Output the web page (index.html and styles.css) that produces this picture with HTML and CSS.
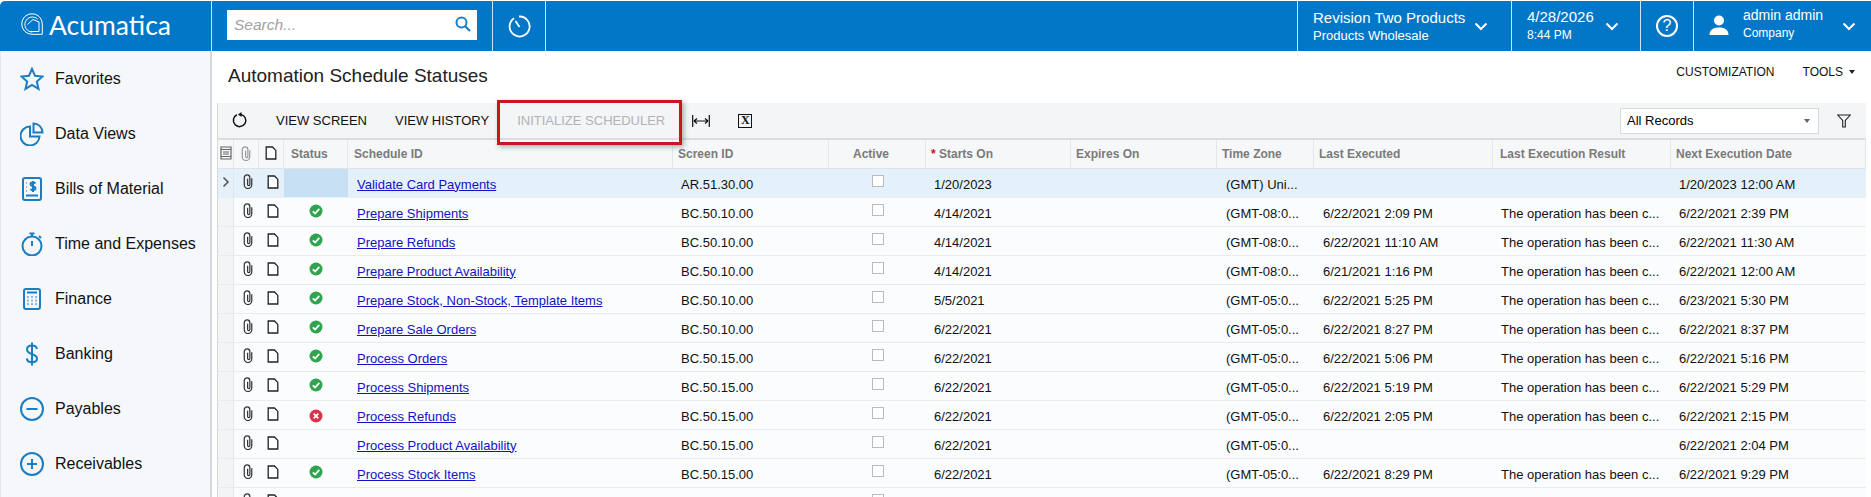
FILE: index.html
```html
<!DOCTYPE html>
<html lang="en">
<head>
<meta charset="utf-8">
<title>Automation Schedule Statuses</title>
<link rel="stylesheet" href="styles.css">
</head>
<body>
<svg class="defs" width="0" height="0" aria-hidden="true">
  <symbol id="clip" viewBox="0 0 12 16"><path d="M10 4.500v7a4 4 0 0 1-8 0V4a3 3 0 0 1 6 0v7.300a1.200 1.200 0 0 1-2.400 0V5" fill="none" stroke="currentColor" stroke-width="1.300"/></symbol>
  <symbol id="file" viewBox="0 0 12 14"><path d="M1.200 1h6.300l3.300 3.400v8.600H1.200z" fill="#fff" stroke="currentColor" stroke-width="1.300"/></symbol>
  <symbol id="ok" viewBox="0 0 14 14"><circle cx="7" cy="7" r="6.500" fill="#2fa44f"/><path d="M3.800 7.300l2.300 2.200 4.200-4.600" fill="none" stroke="#fff" stroke-width="1.800"/></symbol>
  <symbol id="err" viewBox="0 0 14 14"><circle cx="7" cy="7" r="6.500" fill="#d8344a"/><path d="M4.700 4.700l4.600 4.600M9.300 4.700l-4.600 4.600" fill="none" stroke="#fff" stroke-width="1.700"/></symbol>
</svg>

<header class="topbar">
  <div class="brand">
    <svg class="brand-mark" viewBox="0 0 22 22"><g fill="none" stroke="#fff" stroke-width="1"><path d="M11 .7a10.300 10.300 0 0 0 0 20.600h10.300V11A10.300 10.300 0 0 0 11 .7z"/><path d="M16.500 6a7.500 7.500 0 1 0-5 13"/><path d="M6.500 11.500l5.500-5 6 2.500v9.500H9"/></g></svg>
    <span class="brand-name">Acumatica</span>
  </div>
  <div class="search-cell">
    <div class="search">
      <span class="search-text">Search...</span>
      <svg class="search-icon" viewBox="0 0 16 16"><circle cx="6.500" cy="6.500" r="5" fill="none" stroke="#1b7fc7" stroke-width="2"/><path d="M10 10l5 5" stroke="#1b7fc7" stroke-width="2.200"/></svg>
    </div>
  </div>
  <div class="history-cell">
    <svg class="history-icon" viewBox="0 0 24 24"><path d="M7 4.200A10 10 0 1 0 12 2.500" fill="none" stroke="#fff" stroke-width="1.800"/><path d="M12.500 13L8.500 7" stroke="#fff" stroke-width="1.800"/></svg>
  </div>
  <div class="top-spacer"></div>
  <div class="top-cell branch">
    <div class="stack"><span class="line-a">Revision Two Products</span><span class="line-b">Products Wholesale</span></div>
    <svg class="chev" viewBox="0 0 14 9"><path d="M1.500 1.500L7 7l5.500-5.500" fill="none" stroke="#fff" stroke-width="2"/></svg>
  </div>
  <div class="top-cell date">
    <div class="stack"><span class="line-a date-a">4/28/2026</span><span class="line-b time">8:44 PM</span></div>
    <svg class="chev" viewBox="0 0 14 9"><path d="M1.500 1.500L7 7l5.500-5.500" fill="none" stroke="#fff" stroke-width="2"/></svg>
  </div>
  <div class="top-cell help">
    <span class="help-mark">?</span>
  </div>
  <div class="top-cell user">
    <svg class="user-icon" viewBox="0 0 20 22"><circle cx="10" cy="6.500" r="5" fill="#fff"/><path d="M0.500 21c0-5 3.500-7.500 9.500-7.500s9.500 2.500 9.500 7.500z" fill="#fff"/></svg>
    <div class="stack user-stack"><span class="line-a user-a">admin admin</span><span class="line-b user-b">Company</span></div>
    <svg class="chev" viewBox="0 0 14 9"><path d="M1.500 1.500L7 7l5.500-5.500" fill="none" stroke="#fff" stroke-width="2"/></svg>
  </div>
</header>

<div class="body-row">
  <nav class="sidebar">
    <a class="nav-item"><span class="nav-icon"><svg viewBox="0 0 24 24"><path d="M12 1.800l3 7 7.500.7-5.700 5 1.700 7.400-6.500-3.900-6.500 3.900 1.700-7.400-5.700-5 7.500-.7z"/></svg></span>Favorites</a>
    <a class="nav-item"><span class="nav-icon"><svg viewBox="0 0 24 24"><path d="M10 4.500a9.500 9.500 0 1 0 9.500 10H10z"/><path d="M13.500 1.500a9 9 0 0 1 9 9h-9z"/></svg></span>Data Views</a>
    <a class="nav-item"><span class="nav-icon"><svg viewBox="0 0 24 24"><rect x="3" y="1" width="18" height="22" rx="2"/><path d="M15.500 6.500c-1-1.300-5-1.500-5 .8 0 2.500 5 1.400 5 4 0 2.200-4 2.200-5 .7M13 4v11M6 6h.5M6 10h.5M6 14h.5M6 18.500h12"/></svg></span>Bills of Material</a>
    <a class="nav-item"><span class="nav-icon"><svg viewBox="0 0 24 24"><circle cx="12" cy="14" r="9.500"/><path d="M12 9v5M9.500 1.500h5M12 1.500v3M19 4l2 2"/></svg></span>Time and Expenses</a>
    <a class="nav-item"><span class="nav-icon"><svg viewBox="0 0 24 24"><rect x="4" y="2" width="16" height="20" rx="2"/><path d="M7 5.500h10M7.500 10h1M11.500 10h1M15.500 10h1M7.500 13.500h1M11.500 13.500h1M15.500 13.500h1M7.500 17h1M11.500 17h1M15.500 17h1"/></svg></span>Finance</a>
    <a class="nav-item"><span class="nav-icon"><svg viewBox="0 0 24 24"><path d="M17 7c-.5-2.500-2.500-3.500-5-3.500-3 0-5 1.500-5 4 0 6 10 3.500 10 9 0 2.500-2 3.800-5 3.800-2.800 0-4.800-1.300-5.200-3.800M12 .5v23"/></svg></span>Banking</a>
    <a class="nav-item"><span class="nav-icon"><svg viewBox="0 0 24 24"><circle cx="12" cy="12" r="11"/><path d="M6.500 12h11"/></svg></span>Payables</a>
    <a class="nav-item"><span class="nav-icon"><svg viewBox="0 0 24 24"><circle cx="12" cy="12" r="11"/><path d="M7 12h10M12 7v10"/></svg></span>Receivables</a>
  </nav>

  <main class="content">
    <div class="title-row">
      <h1 class="page-title">Automation Schedule Statuses</h1>
      <div class="page-actions">
        <span>CUSTOMIZATION</span>
        <span class="tools">TOOLS<i class="caret"></i></span>
      </div>
    </div>

    <section class="grid">
      <div class="toolbar">
        <svg class="refresh" viewBox="0 0 16 16"><path d="M5 2.800A6.200 6.200 0 1 0 9 2.400" fill="none" stroke="#111" stroke-width="1.500"/><path d="M9.500 0v5L6 2.500z" fill="#111"/></svg>
        <span class="tb-btn first-btn">VIEW SCREEN</span>
        <span class="tb-btn">VIEW HISTORY</span>
        <span class="tb-btn disabled">INITIALIZE SCHEDULER</span>
        <svg class="fit" viewBox="0 0 18 14"><path d="M.7 1v12M17.300 1v12M2 7h14M2 7l3-2.500M2 7l3 2.500M16 7l-3-2.500M16 7l-3 2.500" fill="none" stroke="#111" stroke-width="1.200"/></svg>
        <span class="excel">X</span>
        <span class="tb-fill"></span>
        <div class="select"><span>All Records</span><i class="caret grey"></i></div>
        <svg class="filter" viewBox="0 0 14 14"><path d="M.7 1h12.600L8.300 6.500V13h-2.600V6.500z" fill="none" stroke="#222" stroke-width="1.100"/></svg>
      </div>
      <div class="red-box"></div>
      <table class="data">
        <colgroup>
          <col class="c1"><col class="c2"><col class="c3"><col class="c4"><col class="c5"><col class="c6"><col class="c7"><col class="c8"><col class="c9"><col class="c10"><col class="c11"><col class="c12"><col class="c13">
        </colgroup>
        <thead>
          <tr>
            <th class="ic"><svg class="i-grid" viewBox="0 0 12 14"><path d="M1 1h10v2.500H1zM1 3.500h10v7H1zM1 10.500h10v2.500H1zM3 6h6M3 8h6" fill="none" stroke="#666" stroke-width="1.200"/></svg></th>
            <th class="ic"><svg class="i-clip light"><use href="#clip"/></svg></th>
            <th class="ic"><svg class="i-file"><use href="#file"/></svg></th>
            <th>Status</th><th>Schedule ID</th><th>Screen ID</th><th class="center">Active</th><th><span class="req">*</span> Starts On</th><th>Expires On</th><th>Time Zone</th><th>Last Executed</th><th>Last Execution Result</th><th>Next Execution Date</th>
          </tr>
        </thead>
        <tbody>
          <tr class="active-row">
            <td class="gut"><svg class="expander" viewBox="0 0 8 12"><path d="M1.500 1.500L6 6l-4.500 4.500" fill="none" stroke="#555" stroke-width="1.600"/></svg></td>
            <td class="ic"><svg class="i-clip"><use href="#clip"/></svg></td><td class="ic"><svg class="i-file"><use href="#file"/></svg></td>
            <td class="status-cell"></td><td><a href="#">Validate Card Payments</a></td><td>AR.51.30.00</td><td class="center"><span class="cb"></span></td><td>1/20/2023</td><td></td><td>(GMT) Uni...</td><td></td><td></td><td>1/20/2023 12:00 AM</td>
          </tr>
          <tr>
            <td class="gut"></td><td class="ic"><svg class="i-clip"><use href="#clip"/></svg></td><td class="ic"><svg class="i-file"><use href="#file"/></svg></td>
            <td class="st"><svg class="i-st"><use href="#ok"/></svg></td><td><a href="#">Prepare Shipments</a></td><td>BC.50.10.00</td><td class="center"><span class="cb"></span></td><td>4/14/2021</td><td></td><td>(GMT-08:0...</td><td>6/22/2021 2:09 PM</td><td>The operation has been c...</td><td>6/22/2021 2:39 PM</td>
          </tr>
          <tr>
            <td class="gut"></td><td class="ic"><svg class="i-clip"><use href="#clip"/></svg></td><td class="ic"><svg class="i-file"><use href="#file"/></svg></td>
            <td class="st"><svg class="i-st"><use href="#ok"/></svg></td><td><a href="#">Prepare Refunds</a></td><td>BC.50.10.00</td><td class="center"><span class="cb"></span></td><td>4/14/2021</td><td></td><td>(GMT-08:0...</td><td>6/22/2021 11:10 AM</td><td>The operation has been c...</td><td>6/22/2021 11:30 AM</td>
          </tr>
          <tr>
            <td class="gut"></td><td class="ic"><svg class="i-clip"><use href="#clip"/></svg></td><td class="ic"><svg class="i-file"><use href="#file"/></svg></td>
            <td class="st"><svg class="i-st"><use href="#ok"/></svg></td><td><a href="#">Prepare Product Availability</a></td><td>BC.50.10.00</td><td class="center"><span class="cb"></span></td><td>4/14/2021</td><td></td><td>(GMT-08:0...</td><td>6/21/2021 1:16 PM</td><td>The operation has been c...</td><td>6/22/2021 12:00 AM</td>
          </tr>
          <tr>
            <td class="gut"></td><td class="ic"><svg class="i-clip"><use href="#clip"/></svg></td><td class="ic"><svg class="i-file"><use href="#file"/></svg></td>
            <td class="st"><svg class="i-st"><use href="#ok"/></svg></td><td><a href="#">Prepare Stock, Non-Stock, Template Items</a></td><td>BC.50.10.00</td><td class="center"><span class="cb"></span></td><td>5/5/2021</td><td></td><td>(GMT-05:0...</td><td>6/22/2021 5:25 PM</td><td>The operation has been c...</td><td>6/23/2021 5:30 PM</td>
          </tr>
          <tr>
            <td class="gut"></td><td class="ic"><svg class="i-clip"><use href="#clip"/></svg></td><td class="ic"><svg class="i-file"><use href="#file"/></svg></td>
            <td class="st"><svg class="i-st"><use href="#ok"/></svg></td><td><a href="#">Prepare Sale Orders</a></td><td>BC.50.10.00</td><td class="center"><span class="cb"></span></td><td>6/22/2021</td><td></td><td>(GMT-05:0...</td><td>6/22/2021 8:27 PM</td><td>The operation has been c...</td><td>6/22/2021 8:37 PM</td>
          </tr>
          <tr>
            <td class="gut"></td><td class="ic"><svg class="i-clip"><use href="#clip"/></svg></td><td class="ic"><svg class="i-file"><use href="#file"/></svg></td>
            <td class="st"><svg class="i-st"><use href="#ok"/></svg></td><td><a href="#">Process Orders</a></td><td>BC.50.15.00</td><td class="center"><span class="cb"></span></td><td>6/22/2021</td><td></td><td>(GMT-05:0...</td><td>6/22/2021 5:06 PM</td><td>The operation has been c...</td><td>6/22/2021 5:16 PM</td>
          </tr>
          <tr>
            <td class="gut"></td><td class="ic"><svg class="i-clip"><use href="#clip"/></svg></td><td class="ic"><svg class="i-file"><use href="#file"/></svg></td>
            <td class="st"><svg class="i-st"><use href="#ok"/></svg></td><td><a href="#">Process Shipments</a></td><td>BC.50.15.00</td><td class="center"><span class="cb"></span></td><td>6/22/2021</td><td></td><td>(GMT-05:0...</td><td>6/22/2021 5:19 PM</td><td>The operation has been c...</td><td>6/22/2021 5:29 PM</td>
          </tr>
          <tr>
            <td class="gut"></td><td class="ic"><svg class="i-clip"><use href="#clip"/></svg></td><td class="ic"><svg class="i-file"><use href="#file"/></svg></td>
            <td class="st"><svg class="i-st low"><use href="#err"/></svg></td><td><a href="#">Process Refunds</a></td><td>BC.50.15.00</td><td class="center"><span class="cb"></span></td><td>6/22/2021</td><td></td><td>(GMT-05:0...</td><td>6/22/2021 2:05 PM</td><td>The operation has been c...</td><td>6/22/2021 2:15 PM</td>
          </tr>
          <tr>
            <td class="gut"></td><td class="ic"><svg class="i-clip"><use href="#clip"/></svg></td><td class="ic"><svg class="i-file"><use href="#file"/></svg></td>
            <td class="st"></td><td><a href="#">Process Product Availability</a></td><td>BC.50.15.00</td><td class="center"><span class="cb"></span></td><td>6/22/2021</td><td></td><td>(GMT-05:0...</td><td></td><td></td><td>6/22/2021 2:04 PM</td>
          </tr>
          <tr>
            <td class="gut"></td><td class="ic"><svg class="i-clip"><use href="#clip"/></svg></td><td class="ic"><svg class="i-file"><use href="#file"/></svg></td>
            <td class="st"><svg class="i-st"><use href="#ok"/></svg></td><td><a href="#">Process Stock Items</a></td><td>BC.50.15.00</td><td class="center"><span class="cb"></span></td><td>6/22/2021</td><td></td><td>(GMT-05:0...</td><td>6/22/2021 8:29 PM</td><td>The operation has been c...</td><td>6/22/2021 9:29 PM</td>
          </tr>
          <tr>
            <td class="gut"></td><td class="ic"><svg class="i-clip"><use href="#clip"/></svg></td><td class="ic"><svg class="i-file"><use href="#file"/></svg></td>
            <td class="st"></td><td></td><td></td><td class="center"><span class="cb"></span></td><td></td><td></td><td></td><td></td><td></td><td></td>
          </tr>
        </tbody>
      </table>
    </section>
  </main>
</div>
</body>
</html>
```

FILE: styles.css
```css
* { box-sizing: border-box; }
html, body { margin: 0; height: 497px; overflow: hidden; background: #fff; }
body { font-family: "Liberation Sans", Arial, sans-serif; color: #000; font-size: 13px; }
.defs { position: absolute; }

.topbar { display: flex; height: 50px; margin-top: 1px; background: #0277c8; color: #fff; border-top-left-radius: 5px; }
.brand { width: 212px; display: flex; align-items: center; padding: 0 0 2px 21px; border-right: 1px solid #cfe4f4; }
.brand-mark { width: 22px; height: 22px; flex: none; margin-bottom: 3px; }
.brand-name { font-family: Lato, sans-serif; font-size: 26.5px; margin-left: 6px; }
.search-cell { width: 281px; padding: 9px 15px 0 15px; border-right: 1px solid #cfe4f4; }
.search { width: 250px; height: 30px; background: #fff; display: flex; align-items: center; justify-content: space-between; padding: 0 6px 0 7px; }
.search-text { font-style: italic; font-size: 15.5px; color: #a2a2a2; }
.search-icon { width: 16px; height: 16px; margin-bottom: 2px; }
.history-cell { width: 53px; display: flex; align-items: center; justify-content: center; border-right: 1px solid #cfe4f4; }
.history-icon { width: 24px; height: 24px; }
.top-spacer { flex: 1; }
.top-cell { display: flex; align-items: center; border-left: 1px solid #cfe4f4; }
.branch { width: 214px; padding-left: 15px; }
.date { width: 129px; padding-left: 15px; }
.help { width: 53px; justify-content: center; }
.user { width: 178px; padding-left: 15px; }
.stack { display: flex; flex-direction: column; }
.line-a { font-size: 15px; line-height: 18px; }
.line-b { font-size: 13px; line-height: 17px; }
.branch .stack { width: 161px; padding-top: 1px; }
.date .stack { width: 78px; }
.date-a { font-size: 15px; margin-bottom: 1px; }
.time { font-size: 12px; }
.chev { width: 14px; height: 9px; flex: none; }
.help-mark { width: 22px; height: 22px; border: 2px solid #fff; border-radius: 50%; font-size: 16px; line-height: 18px; text-align: center; }
.user-icon { width: 20px; height: 22px; flex: none; margin-bottom: 3px; }
.user-stack { width: 99px; margin-left: 14px; }
.user-a { font-size: 14px; line-height: 19px; margin-top: -4px; }
.user-b { font-size: 12px; line-height: 17px; }

.body-row { display: flex; height: 446px; }
.sidebar { width: 212px; flex: none; background: #f5f7fa; border-right: 2px solid #d4d8dc; border-left: 1px solid #e4e6e9; }
.nav-item { display: flex; align-items: center; height: 55px; font-size: 16px; color: #111; }
.nav-icon { width: 54px; flex: none; display: flex; padding-left: 19px; }
.nav-icon svg { width: 24px; height: 24px; fill: none; stroke: #1a7dc2; stroke-width: 2; }

.content { flex: 1; min-width: 0; padding-left: 5px; padding-right: 5px; }
.title-row { height: 52px; display: flex; align-items: center; justify-content: space-between; padding: 0 0 2px 11px; }
.page-title { margin: 0; font-size: 19px; font-weight: 400; color: #222; }
.page-actions { display: flex; gap: 28px; font-size: 12px; margin-right: 11px; padding-bottom: 8px; color: #111; }
.tools { display: flex; align-items: center; }
.caret { display: inline-block; width: 0; height: 0; border-left: 3.500px solid transparent; border-right: 3.500px solid transparent; border-top: 4px solid #222; margin-left: 6px; }
.caret.grey { border-top-color: #666; margin: 0; }

.grid { position: relative; border-left: 1px solid #d4d8dc; }
.toolbar { height: 37px; display: flex; align-items: center; background: #f4f5f7; border-bottom: 2px solid #dadde1; }
.refresh { width: 16px; height: 16px; margin: 0 0 2px 14px; flex: none; }
.tb-btn { font-size: 13px; margin-left: 28px; color: #111; white-space: nowrap; }
.disabled { color: #b1b3b5; }
.fit { width: 18px; height: 14px; margin-left: 27px; flex: none; }
.excel { width: 14px; height: 14px; border: 1.500px solid #111; margin-left: 28px; font: 700 12px/11px "Liberation Serif", serif; text-align: center; color: #111; }
.tb-fill { flex: 1; }
.select { width: 199px; height: 26px; background: #fff; border: 1px solid #d6d9dd; display: flex; align-items: center; justify-content: space-between; padding: 0 8px 0 6px; font-size: 13px; }
.filter { width: 14px; height: 14px; margin: 0 15px 0 18px; flex: none; }
.red-box { position: absolute; left: 279px; top: -3px; width: 185px; height: 45px; border: 3px solid #c7161d; box-shadow: 2px 2px 5px rgba(0,0,0,.3); pointer-events: none; }

.data { width: 1648px; table-layout: fixed; border-collapse: separate; border-spacing: 0; }
.c1 { width: 16px; } .c2 { width: 25px; } .c3 { width: 25px; } .c4 { width: 64px; } .c5 { width: 325px; }
.c6 { width: 156px; } .c7 { width: 97px; } .c8 { width: 145px; } .c9 { width: 146px; } .c10 { width: 97px; }
.c11 { width: 179px; } .c12 { width: 178px; } .c13 { width: 195px; }
th { height: 29px; padding: 0 0 0 5px; font-size: 12px; font-weight: 700; color: #7a7a7a; text-align: left; background: #f6f7f9; border-bottom: 1px solid #dfe2e6; border-right: 1px solid #e4e7ea; white-space: nowrap; overflow: hidden; }
th.ic { padding: 0 0 2px; text-align: center; }
th:nth-child(4) { padding-left: 7px; }
th:nth-child(5) { padding-left: 6px; }
th:nth-child(12) { padding-left: 7px; }
td { height: 29px; padding: 2px 0 0 8px; background: #fbfcfe; border-bottom: 1px solid #e9ecef; white-space: nowrap; overflow: hidden; color: #111; }
td:nth-child(5), td:nth-child(10), td:nth-child(11) { padding-left: 9px; }
td a { color: #1212c4; }
td.ic { padding: 0 0 4px 2px; text-align: center; }
td.gut { padding: 0 0 4px 4px; background: #f3f4f6; border-right: 1px solid #e4e7ea; }
td.st { padding: 0 0 3px; text-align: center; }
th.center { padding-left: 0; padding-right: 12px; text-align: center; }
td.center { padding: 0 0 7px; text-align: center; }
.active-row td { background: #e4f1fa; border-bottom-color: #e4f1fa; }
.active-row td.status-cell { background: #c7e0f4; }
.i-clip { width: 12px; height: 15px; color: #333; vertical-align: middle; }
.i-clip.light { color: #9b9b9b; }
.i-file { width: 12px; height: 14px; color: #222; vertical-align: middle; }
.i-grid { width: 12px; height: 14px; vertical-align: middle; }
.i-st { width: 14px; height: 14px; vertical-align: middle; }
.i-st.low { margin-top: 5px; }
.expander { width: 8px; height: 12px; vertical-align: middle; }
.cb { display: inline-block; width: 12px; height: 12px; background: #fff; border: 1px solid #bbb; vertical-align: middle; }
.req { color: #d0121a; }
```
